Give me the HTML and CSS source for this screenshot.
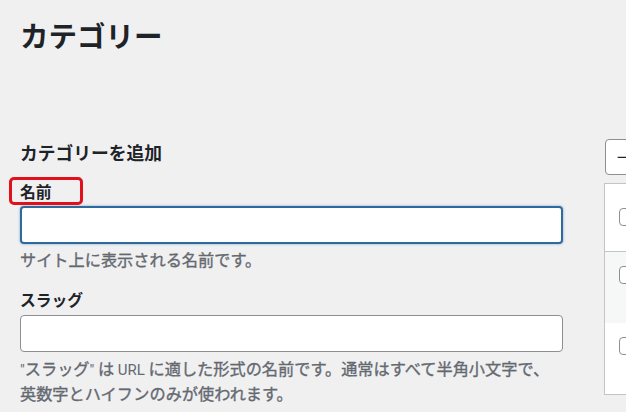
FILE: index.html
```html
<!DOCTYPE html>
<html lang="ja">
<head>
<meta charset="UTF-8">
<meta name="viewport" content="width=device-width, initial-scale=1.0">
<title>カテゴリー</title>
<link rel="stylesheet" href="styles.css">
</head>
<body>

<div class="wrap">
  <h1 class="page-title">カテゴリー</h1>

  <div class="columns">
    <div class="col-left">
      <h2>カテゴリーを追加</h2>

      <div class="field">
        <label class="label-mark">名前<span class="mark"></span></label>
        <input type="text" class="input focused">
        <p class="help">サイト上に表示される名前です。</p>
      </div>

      <div class="field slug">
        <label>スラッグ</label>
        <input type="text" class="input">
        <p class="help help-long"><span class="latin">"</span>スラッグ<span class="latin">"</span> は <span class="latin">URL</span> に適した形式の名前です。通常はすべて半角小文字で、<br>英数字とハイフンのみが使われます。</p>
      </div>
    </div>

    <div class="col-right">
      <div class="bulk">一括操作</div>
      <div class="table">
        <div class="row head"><span class="cb"></span></div>
        <div class="row odd"><span class="cb"></span></div>
        <div class="row"><span class="cb"></span></div>
      </div>
    </div>
  </div>
</div>

</body>
</html>
```

FILE: styles.css
```css
html, body {
    overflow: hidden;
}

body {
    margin: 0;
    background: #f0f0f1;
    color: #1d2327;
    font-family: "Noto Sans CJK JP", "Noto Sans", sans-serif;
    text-spacing-trim: space-all;
}

.wrap {
    padding: 17px 0 0 20px;
}

.page-title {
    margin: 0;
    font-size: 28.5px;
    line-height: 36px;
    font-weight: 700;
}

.columns {
    display: flex;
    gap: 41px;
}

.col-left {
    flex: none;
    width: 543px;
}

h2 {
    margin: 87px 0 0;
    font-size: 17.75px;
    line-height: 24px;
    font-weight: 700;
}

label {
    display: block;
    font-size: 15.75px;
    line-height: 22px;
    font-weight: 700;
}

.field {
    margin-top: 17px;
}

.field.slug {
    margin-top: 19px;
}

.label-mark {
    position: relative;
    width: max-content;
}

.mark {
    position: absolute;
    left: -11px;
    top: -4px;
    width: 74px;
    height: 28px;
    box-sizing: border-box;
    border: 3px solid #e2101b;
    border-radius: 5px;
}

.input {
    display: block;
    box-sizing: border-box;
    width: 100%;
    height: 37px;
    margin: 4px 0 0;
    padding: 0 8px;
    border: 1px solid #8c8f94;
    border-radius: 4px;
    background: #fff;
}

.input.focused {
    height: 38px;
    margin-top: 3px;
    border: 2px solid #2f6a9e;
    box-shadow: 0 0 2px 1px rgba(34, 113, 177, 0.25);
}

.help {
    margin: 4px 0 0;
    font-size: 16.2px;
    line-height: 22px;
    color: #646970;
    -webkit-text-stroke: 0.35px #646970;
}

.help-long {
    margin-top: 5px;
    line-height: 23px;
}

.latin {
    font-family: "Liberation Sans Narrow", "Roboto", sans-serif;
    font-size: 15px;
    -webkit-text-stroke: 0;
}

.col-right {
    flex: none;
    width: 400px;
    padding-top: 86px;
}

.bulk {
    box-sizing: border-box;
    height: 36px;
    margin-left: 1px;
    width: 160px;
    padding-left: 11px;
    border: 1px solid #8c8f94;
    border-radius: 4px;
    background: #fff;
    font-size: 15px;
    line-height: 34px;
}

.table {
    margin-top: 8px;
    border: 1px solid #c3c4c7;
    background: #fff;
}

.row {
    height: 71px;
    padding: 14px 0 0 14px;
    box-sizing: border-box;
}

.row.head {
    height: 68px;
    padding-top: 24px;
    border-bottom: 1px solid #c3c4c7;
}

.row.odd {
    background: #f6f7f7;
}

.cb {
    display: block;
    width: 18px;
    height: 18px;
    box-sizing: border-box;
    border: 1px solid #8c8f94;
    border-radius: 4px;
    background: #fff;
}
```
